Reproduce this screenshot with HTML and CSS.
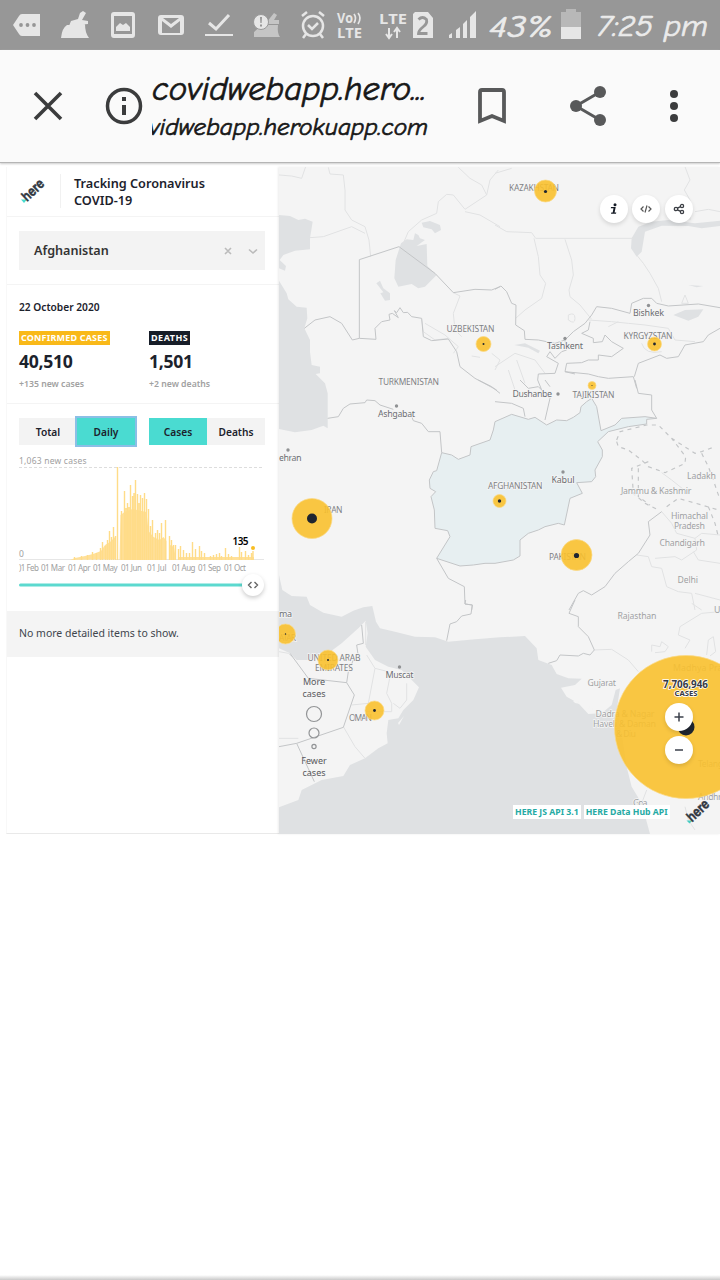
FILE: index.html
```html
<!DOCTYPE html>
<html lang="en">
<head>
<meta charset="utf-8">
<title>Tracking Coronavirus COVID-19</title>
<link rel="stylesheet" href="styles.css">
</head>
<body>
<header class="status">
  <svg class="status-icons" width="480" height="50" viewBox="0 0 480 50">
    <g fill="#e6e6e6">
      <path d="M13 25l6-9q1-2 3-2h18v22H22q-2 0-3-2z"/>
      <path d="M80 13l3-2 3 2-4 7 6 1v3l-19 2 2-5 7-2zM67 25l18-1q0 9 4 14H61q1-10 6-13z"/>
      <path fill-rule="evenodd" d="M114 12h18q3 0 3 3v20q0 3-3 3h-18q-3 0-3-3V15q0-3 3-3zm0 4v18h18V16zM116 31v-4l4-4 3 2 3-2 4 4v4z"/>
      <path fill-rule="evenodd" d="M161 15h20q3 0 3 3v14q0 3-3 3h-20q-3 0-3-3V18q0-3 3-3zm1 18h18V21l-9 7-9-7zM163 18l8 6 8-6z"/>
      <path d="M205 34h28v2h-28z"/>
      <path fill="#c5c5c5" d="M270 18l4-5 3 2-3 5h5v4h-13zM268 25h10q-1 8 2 12h-26v-5q7-7 14-7z"/>
      <circle cx="261" cy="22" r="7.5" stroke="#999"/>
    </g>
    <g fill="#969696"><circle cx="21" cy="25" r="1.9"/><circle cx="27.500" cy="25" r="1.900"/><circle cx="34" cy="25" r="1.900"/><path d="M260 17h2l-.4 6h-1.200zm0 7.500h2v2h-2z"/></g>
    <g fill="none" stroke="#e6e6e6" stroke-width="3">
      <path d="M209 23l7 6 13-14"/>
      <g stroke-width="2.500"><circle cx="313" cy="26" r="10"/><path d="M302 16l5-4M324 16l-5-4M306 34l-3 4M320 34l3 4M308 25l4 4 6-6"/></g>
      <path stroke-width="1.700" d="M354 14q3 4 0 9M358 13q4 5 0 11"/>
      <path stroke-width="2" d="M389 28v9m-3-3l3 4 3-4M397 38v-9m-3 3l3-4 3 4"/>
    </g>
    <g class="status-tiny"><text x="337" y="23" textLength="16" lengthAdjust="spacingAndGlyphs">Vo</text><text x="337" y="38" textLength="25" lengthAdjust="spacingAndGlyphs">LTE</text><text x="379" y="24" textLength="28" lengthAdjust="spacingAndGlyphs">LTE</text></g>
    <path fill="#e6e6e6" d="M415 12h13l5 6v20h-20V14zM449 38v-3l3-2v5zM456 38v-8l4-3v11zM463 38V24l4-4v18zM470 38V17l6-6v27z"/>
    <path fill="none" stroke="#979797" stroke-width="2.800" d="M418.500 19.500q4-4 8 0 1 4-3 7-5 4-5 7h9"/>
  </svg>
  <svg width="240" height="50" viewBox="480 0 240 50">
    <g class="script-text pale"><text x="489" y="37" font-size="31" textLength="64" lengthAdjust="spacingAndGlyphs">43%</text><text x="597" y="36" font-size="31" textLength="111" lengthAdjust="spacingAndGlyphs">7:25 pm</text></g>
    <path fill="#b8b8b8" d="M561 12h5v-3h10v3h5v15h-20z"/><path fill="#e6e6e6" d="M561 27h20v12h-20z"/>
  </svg>
</header>
<nav class="browser">
  <svg width="152" height="112" viewBox="0 50 152 112" fill="none" stroke="#3b3c3d">
    <path stroke-width="3.600" d="M35 93l26 26M61 93l-26 26"/>
    <circle cx="124" cy="106" r="16.500" stroke-width="3.500"/><path stroke-width="4" d="M124 97v4M124 105v10"/>
  </svg>
  <svg width="298" height="112" viewBox="152 50 298 112">
    <g class="script-text"><text x="152" y="100" font-size="34" textLength="274" lengthAdjust="spacingAndGlyphs">covidwebapp.hero...</text><text x="149" y="135" font-size="25" textLength="279" lengthAdjust="spacingAndGlyphs">vidwebapp.herokuapp.com</text></g>
  </svg>
  <svg width="270" height="112" viewBox="450 50 270 112">
    <path fill="none" stroke="#58595a" stroke-width="3.800" d="M480 121V92q0-2 2-2h20q2 0 2 2v29l-12-5z"/>
    <path fill="none" stroke="#58595a" stroke-width="3" d="M600 92l-24 14 24 14"/>
    <g fill="#58595a"><circle cx="600" cy="92" r="6"/><circle cx="576" cy="106" r="6"/><circle cx="600" cy="120" r="6"/></g>
    <g fill="#3b3c3d"><circle cx="674" cy="94" r="4"/><circle cx="674" cy="106" r="4"/><circle cx="674" cy="118" r="4"/></g>
  </svg>
</nav>
<main class="app">
  <aside class="panel">
    <div class="brand">
      <svg class="brand-logo" width="42" height="34" viewBox="13 174 42 34"><path fill="#48dad0" d="M21 199.500h6l-3 3.500z"/><text class="here" transform="translate(27 202) rotate(-43)" textLength="25" lengthAdjust="spacingAndGlyphs">here</text></svg>
      <h1>Tracking Coronavirus<br>COVID-19</h1>
    </div>
    <div class="picker"><div class="select"><span>Afghanistan</span>
      <svg width="36" height="12" viewBox="0 0 36 12" fill="none" stroke="#bbb" stroke-width="1.600"><path d="M2 3l6 6M8 3L2 9M26 4.500l4 3.500 4-3.500"/></svg></div></div>
    <section class="stats">
      <p class="date">22 October 2020</p>
      <div class="cols">
        <div><span class="tag">CONFIRMED CASES</span><strong>40,510</strong><small>+135 new cases</small></div>
        <div><span class="tag dark">DEATHS</span><strong>1,501</strong><small>+2 new deaths</small></div>
      </div>
    </section>
    <section class="trend">
      <div class="toggles"><div class="toggle"><b>Total</b><b class="on focus">Daily</b></div><div class="toggle"><b class="on">Cases</b><b>Deaths</b></div></div>
      <svg class="chart" width="254" height="150" viewBox="18 452 254 150">
        <path stroke="#ddd" stroke-dasharray="3 2" d="M19 467.500H264"/>
        <path stroke="#e6e6e6" d="M19 559.500H264"/>
        <path fill="#ffe09a" d="M70 560l5-2 10-2 8-2 8-3 4-6 5-3 5-5v22zM119.500 560l1-45 4-3 8-3 14 3 2 19 5 6 6 3 4-3 3 4v19zM169 560l1-15 4 2 2 13zM178 560v-3h76v3z"/>
        <path stroke="#ffdc88" stroke-width="1.400" d="M117.500 560V467M74.500 560v-3M81.500 560v-4M87.500 560v-5M92.500 560v-8M96.500 560v-7M100.500 560v-12M102.500 560v-18M105.500 560v-14M107.500 560v-20M109.500 560v-29M111.500 560v-23M113.500 560v-33M115.500 560v-24M121.500 560v-49M124.500 560v-69M126 560v-52M127.500 560v-57M129 560v-53M130.500 560v-75M132.500 560v-64M134 560v-67M135.500 560v-80M137.500 560v-66M139 560v-57M140.500 560v-65M142.500 560v-62M144.500 560v-67M146.500 560v-61M148.500 560v-51M150.500 560v-34M152.500 560v-40M155.500 560v-27M157.500 560v-30M159.500 560v-27M161.500 560v-37M165.500 560v-40M169.500 560v-24M171.500 560v-20M173.500 560v-15M175.500 560v-15M178.500 560v-11M180.500 560v-14M183.500 560v-10M186.500 560v-7M189.500 560v-7M192.500 560v-18M195.500 560v-11M199.500 560v-14M201.500 560v-9M204.500 560v-7M210.500 560v-4M213.500 560v-5M216.500 560v-6M219.500 560v-7M221.500 560v-4M225.500 560v-12M228.500 560v-6M231.500 560v-4M239.500 560v-13M241.500 560v-8M245.500 560v-9M248.500 560v-5M251.500 560v-7M253 560v-9"/>
        <g class="axis"><text x="19" y="464" textLength="67.500">1,063 new cases</text><text x="19" y="556.500">0</text></g>
        <g class="axis months"><text x="19" y="570.500" textLength="20">)1 Feb</text><text x="41" y="570.500" textLength="24">01 Mar</text><text x="68" y="570.500" textLength="22.500">01 Apr</text><text x="93" y="570.500" textLength="24.500">01 May</text><text x="121" y="570.500" textLength="21">01 Jun</text><text x="147" y="570.500" textLength="19.500">01 Jul</text><text x="172" y="570.500" textLength="23.500">01 Aug</text><text x="198" y="570.500" textLength="23">01 Sep</text><text x="224" y="570.500" textLength="22">01 Oct</text></g>
        <text class="latest" x="232.500" y="545" textLength="16">135</text><circle cx="253" cy="548" r="2" fill="#f8bd22"/>
        <path stroke="#5cd9cf" stroke-width="3" stroke-linecap="round" d="M20.500 585H250"/>
        <circle class="lift" cx="253" cy="585" r="11" fill="#fff"/><path fill="none" stroke="#666" stroke-width="1.400" d="M251.500 582l-3 3 3 3M254.500 582l3 3-3 3"/>
      </svg>
    </section>
    <p class="empty">No more detailed items to show.</p>
  </aside>
  <section class="map">
    <svg class="canvas" width="441" height="667" viewBox="279 167 441 667">
      <path fill="#f4f4f4" d="M279 167h441v667H279z"/>
      <g fill="#dfe1e3">
        <path transform="translate(275 160) scale(.33333)" d="M12 165L45 168L70 180L90 176L113 185L105 235L105 268L60 272L25 285L14 300L33 318L30 332L12 325ZM12 362L35 400L40 418L65 440L95 443L97 475L88 505L105 540L105 575L110 615L135 620L135 640L122 642L150 670L158 700V805L145 797L110 810L60 817L12 807ZM378 250L395 238L415 240L420 220L430 225L435 235L450 240L425 258L455 252L457 318L485 345L470 360L450 380L430 385L410 372L370 380L358 355L362 300ZM440 188L465 183L495 195L498 210L480 220L470 208L445 202ZM304 370L315 362L325 385L345 400V420L330 422L316 400L325 397Z"/>
        <path transform="translate(495 160) scale(.33333)" d="M410 235L430 200L470 185L520 180L600 190L675 182V198L620 205L580 198L500 197L450 215L440 275L425 290L408 265ZM535 465L570 450L625 448L610 470L580 482ZM580 375L625 378L605 382ZM58 555L90 550L135 572L130 580L100 563Z"/>
        <path transform="translate(275 600) scale(.33333)" d="M12-75L22-30L50-12L95-10L105 15L145 38L200 50L235 32L265 22L292 18L303 65L315 85L360 95L420 110L480 112L520 125L600 118L675 112L750 108L785 145L790 180L830 195L845 222L880 235L920 236L900 255L858 263L875 290L910 310L940 342L980 340L1010 315L1022 270L1035 265L1025 330L1040 400L1055 500L1070 560L1100 610L1125 702H12V622L70 600L80 570L140 540L205 528L225 495L270 475L310 445L338 430L335 400L340 360L370 355L385 330L415 300L432 262L380 210L340 200L300 180L272 140L278 100L272 62L250 85L200 130L160 160L110 180H65L45 160L12 145Z"/>
      </g>
      <path fill="#f4f4f4" d="M398 723l6-7-5 9zM573 701l4-1 3 4-5-1zM583 698l7 1-3 3zM588 706l6 4-4 2z"/>
      <g fill="none" stroke="#e1e2e3" stroke-width="3">
        <g transform="translate(275 160) scale(.33333)"><path d="M12 45L50 48L80 55L92 20M160 22L165 42L205 45L210 90L210 150L230 180L270 200L282 240L287 290M105 233L145 230L230 200L270 220M385 250L400 215L440 180L485 160L490 125L515 103L535 105L570 148L635 105L620 75L585 55L550 22M635 105L645 60L670 30M570 155L615 165L675 200M535 398L555 408L535 460L540 510L560 530M440 478L445 515L480 540L520 535M450 490L510 525L550 560L535 580M590 588L615 592M650 580L675 600L660 630"/></g>
        <g transform="translate(495 160) scale(.33333)"><path d="M0 195L35 215L110 218L122 235H415M117 235L130 290L135 345L152 370L140 415L90 450L62 475M210 238L230 300L235 345L222 390L225 410L255 435L290 478M425 285L445 310L465 340L490 385L500 425M570 20L585 60L568 90L585 120V180M600 155L640 148L675 155M0 40L50 25M560 430L570 405L580 430ZM280 480L350 485L400 490L450 495L520 505L540 540L600 545M220 465Q240 455 240 475T220 480ZM0 620L60 580L120 600L150 640M40 630L60 690M65 600L90 670M440 550Q450 585 500 575M340 500L370 485"/></g>
        <g transform="translate(495 380) scale(.33333)"><path d="M425 525L460 530L470 560L500 565L515 620L550 635L590 640L600 690M500 395L530 430L545 460L600 475L620 460L675 465M600 475L605 510L560 540L540 530L480 535M595 515L610 540L675 550M500 278L530 300L580 340M600 640L675 660"/></g>
        <g transform="translate(495 600) scale(.33333)"><path d="M675 35L620 40L555 80L550 105L585 120L570 145M590 10L620 30M635 165L640 120L655 110L662 155L645 168M470 155V135L495 140L500 125L520 140L510 155L480 158M298 150L350 148L400 180L430 215M400 600L440 610L455 570M570 620L580 660L600 690M430 650H465"/></g>
        <g transform="translate(275 600) scale(.33333)"><path d="M12 155L40 160L50 170M300 205L280 310L230 315M345 230L335 280L350 310L350 335H270M395 250V300L375 325L355 310M275 165L300 205L340 215M205 380L240 440L270 475M12 415H70M272 65V135"/></g>
      </g>
      <g fill="none" stroke="#c3c5c7" stroke-width="3">
        <g transform="translate(275 160) scale(.33333)"><path d="M253 535V299L372 260L480 340L535 398L600 388L650 390L675 380M88 505L120 480L165 470L200 490L232 540L253 535L303 538L300 505L320 485L345 480L342 463L352 460L370 473L358 452L365 458L375 443L385 458L398 457L410 470L440 475L445 530L470 542L520 537L545 575L555 620L600 655L665 690"/></g>
        <g transform="translate(495 160) scale(.33333)"><path d="M0 388L18 378L35 395L50 430L63 435L62 495L88 512L90 538L130 540L180 550L210 540L235 515L270 490L290 465L305 440L350 445L405 460L410 430L445 415L470 415L485 430L520 438L610 432L675 443M210 540L215 570L200 575L180 595L165 575L155 590L190 610L180 640L130 642L128 660L140 690M210 635L215 610L260 608L280 600L310 600L310 585L350 590L385 565L350 545L330 525L322 545L295 548L295 535L260 520L280 510L285 485M210 635L280 642L310 650L340 655L415 650L425 685M675 505L640 525L625 545L570 555L550 590L515 595L495 585L430 610L418 650M210 635L240 642"/></g>
        <g transform="translate(275 380) scale(.33333)"><path d="M158 115L190 110L205 85L225 72L270 68L275 60L300 62L315 75L355 88M410 110L415 122L440 130L460 155H495L500 218M485 535L520 595L568 620L570 672L592 675L590 690M610 0L650 20L675 40"/></g>
        <path fill="#e7eff1" transform="translate(495 380) scale(.33333)" d="M-175 535L-135 470L-142 452L-180 445L-182 390L-192 350L-178 335L-195 325L-197 300L-185 275L-175 272L-160 218L-130 225L-110 238L-75 225L-72 200L-15 180L-5 150L0 125L50 103L100 118L120 112L155 135L185 120L215 122L235 112L255 98L258 80L275 65L290 55L305 80L318 152L360 135L380 115L450 110L485 115L455 118L455 132L400 140L340 155L308 185L322 210V230L300 270L302 290L290 305L245 308L262 340L225 355L208 435L190 430L150 440L130 450L100 460L75 480L75 528L55 540L0 550L-30 550L-65 555L-105 558Z"/>
        <g transform="translate(495 380) scale(.33333)"><path d="M485 115L470 90V45L430 40L420 0M0 65L50 70L85 85L90 110M75 0L100 25L130 20L165 55L150 120M150 0L165 20M222 690L250 640L265 632L290 645L330 620L360 580L400 545L430 520L465 465L460 425L500 395"/><path stroke-width="3.500" stroke-dasharray="12 13" d="M365 180L375 155L455 135L490 135L530 175L600 220L620 215L660 200M365 185L370 200L400 210L440 240L460 260L510 278L570 250L572 230L530 175M460 245L410 265L415 340L450 370L490 390M430 265V350L465 375M515 380L550 355L620 375L670 390M620 220L640 260L655 300L665 330L672 350M640 380L660 430L670 470"/></g>
        <g transform="translate(495 600) scale(.33333)"><path d="M240 0L222 40L250 50L250 80L280 110L298 150L285 165L265 160L250 168L195 165L185 182L160 190"/></g>
        <g transform="translate(275 600) scale(.33333)"><path d="M572 0L570 12L592 15L588 42L560 48L545 65L525 72L515 122M45 160L100 235L215 248L220 215L235 180L250 170L245 135L265 130L260 75M215 248L238 285L205 382L65 430L12 440M65 430L118 545"/></g>
      </g>
      <g fill="#909294"><circle cx="648.500" cy="305.500" r="1.700"/><circle cx="565" cy="338.500" r="1.700"/><circle cx="558" cy="394" r="1.700"/><circle cx="396.500" cy="406" r="1.700"/><circle cx="288" cy="450" r="1.700"/><circle cx="563" cy="472" r="1.700"/><circle cx="399.500" cy="667" r="1.700"/></g>
      <g class="labels">
        <text x="509" y="191" textLength="50">KAZAKHSTAN</text><text x="446.500" y="332" textLength="48">UZBEKISTAN</text><text x="378.500" y="385" textLength="60.500">TURKMENISTAN</text><text x="623.500" y="338.500" textLength="49">KYRGYZSTAN</text><text x="572.500" y="398" textLength="42">TAJIKISTAN</text><text x="488" y="488.500" textLength="54.500">AFGHANISTAN</text><text x="324" y="512.500" textLength="18.500">IRAN</text><text x="549" y="559.500" textLength="37">PAKISTAN</text><text x="307.500" y="660.500" textLength="53">UNITED ARAB</text><text x="315" y="670.500" textLength="38">EMIRATES</text><text x="349" y="721" textLength="23">OMAN</text><text x="279" y="641" textLength="17">ATAR</text>
      </g>
      <g class="labels city">
        <text x="633" y="316" textLength="31">Bishkek</text><text x="547" y="349" textLength="36">Tashkent</text><text x="512.500" y="397" textLength="39.500">Dushanbe</text><text x="378" y="417" textLength="37">Ashgabat</text><text x="279" y="461" textLength="22.500">ehran</text><text x="551.500" y="483" textLength="23">Kabul</text><text x="385.500" y="677.500" textLength="28">Muscat</text><text x="279" y="617" textLength="13">ma</text>
      </g>
      <g class="labels state">
        <text x="687" y="478.500" textLength="29">Ladakh</text><text x="621" y="493.500" textLength="70.500">Jammu &amp; Kashmir</text><text x="671" y="519" textLength="37">Himachal</text><text x="674" y="528.500" textLength="31">Pradesh</text><text x="659.500" y="545.500" textLength="45.500">Chandigarh</text><text x="677.500" y="583" textLength="20.500">Delhi</text><text x="617.500" y="619" textLength="39">Rajasthan</text><text x="714" y="613">U</text><text x="587.500" y="685.500" textLength="28.500">Gujarat</text><text x="595.500" y="717" textLength="59">Dadra &amp; Nagar</text><text x="593" y="727" textLength="63">Haveli &amp; Daman</text><text x="616" y="737" textLength="20">&amp; Diu</text><text x="673" y="671" textLength="55">Madhya Prad</text><text x="698" y="767" textLength="39">Telangana</text><text x="633" y="806" textLength="14.500">Goa</text><text x="698" y="799.500" textLength="28">Andhra</text>
      </g>
      <g fill="#f9c02c" fill-opacity=".89" stroke="#fbd983" stroke-opacity=".7">
        <circle cx="545.500" cy="191" r="11"/><circle cx="483.500" cy="344" r="7.500"/><circle cx="654.500" cy="344" r="7"/><circle cx="592" cy="385.500" r="4"/><circle cx="312" cy="518.500" r="20"/><circle cx="499.500" cy="501" r="6.500"/><circle cx="576.500" cy="555" r="15.500"/><circle cx="285.500" cy="634" r="10"/><circle cx="328" cy="660" r="10"/><circle cx="374.500" cy="710.500" r="9.500"/><circle cx="686" cy="727" r="71.500"/>
      </g>
      <g fill="#1f2530"><circle cx="545.500" cy="191.500" r="1.600"/><circle cx="483.500" cy="344" r="1"/><circle cx="654.500" cy="344" r="1.400"/><circle cx="312" cy="518.500" r="5"/><circle cx="499.500" cy="501" r="1.700"/><circle cx="576.500" cy="555.500" r="2.600"/><circle cx="285.500" cy="634" r=".7"/><circle cx="328" cy="660" r="1"/><circle cx="374.500" cy="710.500" r="1.400"/><circle cx="686" cy="727" r="8.500"/><circle cx="592" cy="385.500" r=".5"/></g>
      <g class="count"><text x="663" y="687.500" textLength="45" lengthAdjust="spacingAndGlyphs">7,706,946</text><text class="unit" x="674.500" y="695.500" textLength="23" lengthAdjust="spacingAndGlyphs">CASES</text></g>
    </svg>
    <div class="actions">
      <span class="round"><svg width="14" height="14" viewBox="0 0 14 14" fill="#151b25"><circle cx="8" cy="2.700" r="1.500"/><path d="M4 5h4.700L7.600 10.500h1.700l-.3 1.300H4l.3-1.300h1.400l.8-4.200H3.800z"/></svg></span>
      <span class="round"><svg width="14" height="14" viewBox="0 0 14 14" fill="none" stroke="#555" stroke-width="1.200"><path d="M4.500 4.500L2 7l2.500 2.500M9.500 4.500L12 7 9.500 9.500M8 3.500l-2 7"/></svg></span>
      <span class="round"><svg width="14" height="14" viewBox="0 0 14 14" fill="none" stroke="#3b3e44" stroke-width="1.300"><circle cx="4" cy="7" r="1.700"/><circle cx="10" cy="4" r="1.600"/><circle cx="10" cy="10" r="1.600"/><path d="M5.500 6.200l3-1.500M5.500 7.800l3 1.500"/></svg></span>
    </div>
    <div class="zooms"><span class="round"><svg width="14" height="14" viewBox="0 0 14 14" stroke="#3b404b" stroke-width="1.500"><path d="M2.500 7h9M7 2.500v9"/></svg></span><span class="round"><svg width="14" height="14" viewBox="0 0 14 14" stroke="#3b404b" stroke-width="1.500"><path d="M3 7h8"/></svg></span></div>
    <div class="legend"><span>More<br>cases</span>
      <svg width="20" height="46" viewBox="0 0 20 46" fill="none" stroke="#929496" stroke-width="1.200"><circle cx="10" cy="10" r="7.500"/><circle cx="10" cy="29" r="5"/><circle cx="10" cy="42.500" r="2.100"/></svg>
      <span>Fewer<br>cases</span></div>
    <div class="credits"><span>HERE JS API 3.1</span><span>HERE Data Hub API</span></div>
    <svg class="map-logo" width="34" height="32" viewBox="684 797 34 32"><path fill="#48cbc2" d="M686.500 820.500h6l-3 3z"/><text class="here" transform="translate(692 822.500) rotate(-43)" textLength="25" lengthAdjust="spacingAndGlyphs">here</text></svg>
  </section>
</main>
<div class="edge"></div>
</body>
</html>
```
FILE: styles.css
```css
* { box-sizing: border-box; }
body { margin: 0; width: 720px; height: 1280px; overflow: hidden; background: #fff; color: #1c222c; font-family: "Noto Sans", "Open Sans", sans-serif; display: flex; flex-direction: column; }
svg { display: block; flex: none; }
h1, p { margin: 0; }
.status { display: flex; height: 50px; background: #979797; }
.status-tiny { font: 700 14px "Open Sans", sans-serif; fill: #e6e6e6; }
.script-text { font-family: "Comic Neue", Lato, sans-serif; font-style: italic; fill: #171717; stroke: #171717; stroke-width: .7px; }
.script-text.pale { fill: #ebebeb; stroke: #ebebeb; }
.browser { display: flex; height: 113px; background: #fafafa; border-bottom: 1px solid #b5b5b5; box-shadow: 0 1px 2px #ccc; }
.app { display: flex; margin-top: 4px; padding-left: 6px; height: 667px; }
.panel { width: 273px; border-left: 1px solid #f8f8f8; border-bottom: 1px solid #e9e9e9; }
.brand { display: flex; height: 50px; padding: 7px 0 0 6px; border-bottom: 1px solid #f4f4f4; }
.brand-logo { margin-right: 5px; }
.brand h1 { border-left: 1px solid #f1f1f1; height: 34px; padding: 1px 0 0 13px; font-size: 12.700px; line-height: 17px; font-weight: 600; }
.here { font: 700 14px Inter, sans-serif; fill: #323842; stroke: #323842; stroke-width: .4px; }
.picker { height: 68px; padding: 14px 14px 0 12px; border-bottom: 1px solid #f4f4f4; }
.select { display: flex; justify-content: space-between; align-items: center; height: 39px; padding: 0 6px 0 15px; background: #f3f3f3; font-size: 12.600px; font-weight: 600; color: #333; }
.stats { height: 119px; padding: 15px 12px 0; border-bottom: 1px solid #f4f4f4; }
.date { font-size: 10.200px; line-height: 14px; font-weight: 600; }
.cols { display: grid; grid-template-columns: 130px 1fr; margin-top: 17px; }
.cols > div { display: flex; flex-direction: column; align-items: flex-start; }
.tag { height: 14px; padding: 0 2px; background: #f9b919; color: #fff; font-size: 9px; line-height: 14px; font-weight: 700; letter-spacing: .19px; white-space: nowrap; }
.tag.dark { background: #171d28; letter-spacing: .5px; }
.cols strong { margin-top: 5px; font-size: 17.600px; line-height: 22px; font-weight: 700; letter-spacing: -.3px; }
.cols small { margin-top: 5px; font-size: 8.700px; line-height: 14px; font-weight: 600; color: #a1a1a1; }
.trend { height: 207px; padding: 14px 0 0 12px; }
.toggles { display: flex; gap: 14px; }
.toggle { display: flex; height: 27px; }
.toggle b { display: flex; align-items: center; justify-content: center; width: 58px; background: #f3f3f3; font-size: 10.200px; font-weight: 600; }
.toggle .on { background: #4adbd1; }
.toggle .focus { outline: 2px solid #8bbfe6; outline-offset: 0; }
.chart { margin: 7px 0 0 -1px; }
.axis { font-size: 8.500px; fill: #a0a0a0; }
.months { font-size: 8px; }
.latest { font-size: 10px; font-weight: 600; }
.lift { filter: drop-shadow(0 2px 2px rgba(0, 0, 0, .2)); }
.empty { height: 46px; padding-left: 12px; background: #f4f4f4; color: #40454d; font-size: 10.500px; line-height: 44px; }
.map { position: relative; width: 441px; overflow: hidden; box-shadow: -1px 0 2px rgba(0, 0, 0, .08); }
.labels { font-size: 8.500px; fill: #7f8184; stroke: #f5f5f5; stroke-width: 1.500px; paint-order: stroke; }
.city { font-size: 9px; fill: #6c6e72; }
.state { font-size: 8.800px; fill: #a0a1a3; }
.count { font-size: 10px; font-weight: 700; fill: #363944; stroke: #fff; stroke-width: 1.500px; paint-order: stroke; }
.unit { font-size: 7.500px; }
.round { display: flex; align-items: center; justify-content: center; width: 28px; height: 28px; border-radius: 50%; background: #fff; box-shadow: 0 2px 4px rgba(0, 0, 0, .13); }
.actions { position: absolute; top: 27.500px; right: 27px; display: flex; gap: 4.700px; }
.zooms { position: absolute; top: 535.500px; right: 27px; display: flex; flex-direction: column; gap: 5px; }
.legend { position: absolute; top: 509px; left: 15px; width: 40px; display: flex; flex-direction: column; align-items: center; gap: 5px; text-align: center; font-size: 9px; line-height: 12px; color: #58595c; }
.legend svg { margin: -1px 0 0; }
.credits { position: absolute; top: 638px; left: 234px; display: flex; gap: 3px; color: #25aaa4; font-size: 8.700px; line-height: 14px; font-weight: 700; }
.credits span { padding: 0 2px; background: #fff; white-space: nowrap; }
.map-logo { position: absolute; top: 630px; left: 405px; }
.edge { height: 5px; margin-top: auto; background: linear-gradient(#fff, #c9c9c9); }
```
